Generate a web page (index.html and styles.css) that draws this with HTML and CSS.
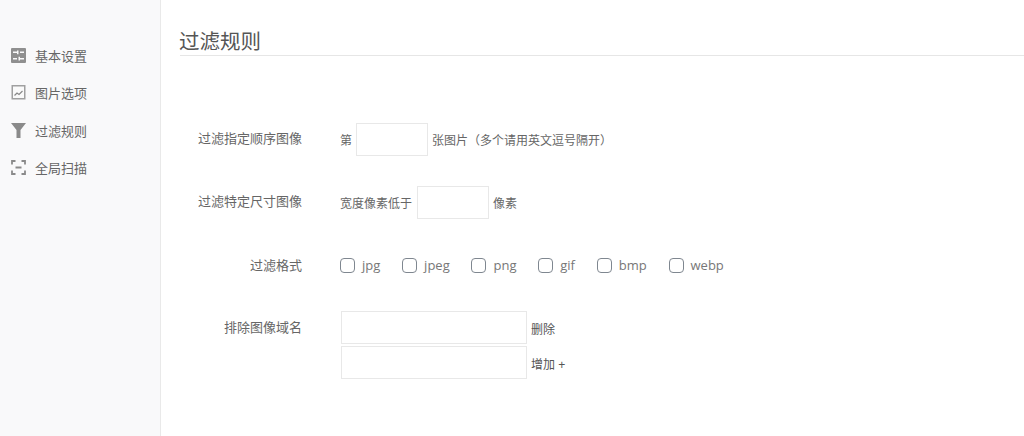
FILE: index.html
```html
<!DOCTYPE html>
<html lang="zh">
<head>
<meta charset="utf-8">
<title>过滤规则</title>
<link rel="stylesheet" href="styles.css">
</head>
<body>
<div class="layout">
  <nav class="sidebar">
    <a class="nav-item">
      <svg class="nav-icon" viewBox="0 0 15 15"><path fill="#8f8f8f" fill-rule="evenodd" d="M1 0h13a1 1 0 0 1 1 1v13a1 1 0 0 1-1 1H1a1 1 0 0 1-1-1V1a1 1 0 0 1 1-1zM2 3.500v1.500h4v1.200h1.500V2.500H6v1zM9 3.500v1.500h4V3.500zM2 10v1.500h4V10zM7.500 8.800v3.700H9v-1h4V10H9V8.800z"/></svg>
      <span>基本设置</span>
    </a>
    <a class="nav-item">
      <svg class="nav-icon" viewBox="0 0 15 15"><rect x="1.250" y="0.750" width="12.500" height="13" fill="#fafafa" stroke="#a0a0a0" stroke-width="1.500"/><path fill="none" stroke="#888" stroke-width="1.200" d="M3.500 10.500l2.500-2.500 2 1.500 3.500-3.500"/></svg>
      <span>图片选项</span>
    </a>
    <a class="nav-item">
      <svg class="nav-icon" viewBox="0 0 15 15"><path fill="#8a8a8a" d="M0 0h15L9.500 7V15h-4V7z"/></svg>
      <span>过滤规则</span>
    </a>
    <a class="nav-item">
      <svg class="nav-icon" viewBox="0 0 15 15"><path fill="none" stroke="#8a8a8a" stroke-width="1.800" d="M4.500 1H1v3.500M10.500 1H14v3.500M4.500 14H1v-3.500M10.500 14H14v-3.500"/><path stroke="#8a8a8a" stroke-width="2" d="M4.500 7.500h6"/></svg>
      <span>全局扫描</span>
    </a>
  </nav>
  <main class="content">
    <h1 class="title"><span class="title-text">过滤规则</span></h1>
    <form class="form">
      <div class="row row-first">
        <label class="row-label">过滤指定顺序图像</label>
        <div class="row-body">
          <span>第</span>
          <input class="field field-small" type="text">
          <span>张图片（多个请用英文逗号隔开）</span>
        </div>
      </div>
      <div class="row">
        <label class="row-label">过滤特定尺寸图像</label>
        <div class="row-body body-size">
          <span>宽度像素低于</span>
          <input class="field field-small" type="text">
          <span>像素</span>
        </div>
      </div>
      <div class="row row-formats">
        <label class="row-label">过滤格式</label>
        <div class="row-body checks">
          <label class="check"><span class="box"></span>jpg</label>
          <label class="check"><span class="box"></span>jpeg</label>
          <label class="check"><span class="box"></span>png</label>
          <label class="check"><span class="box"></span>gif</label>
          <label class="check"><span class="box"></span>bmp</label>
          <label class="check"><span class="box"></span>webp</label>
        </div>
      </div>
      <div class="row row-domains">
        <label class="row-label domain-label">排除图像域名</label>
        <div class="domains">
          <div class="domain-line">
            <input class="field field-wide" type="text">
            <a class="action">删除</a>
          </div>
          <div class="domain-line">
            <input class="field field-wide" type="text">
            <a class="action">增加 +</a>
          </div>
        </div>
      </div>
    </form>
  </main>
</div>
</body>
</html>
```
FILE: styles.css
```css
* { box-sizing: border-box; }
html, body { margin: 0; height: 100%; }
body {
  font-family: "Liberation Sans", "Noto Sans CJK SC", sans-serif;
  color: #606266;
  background: #fff;
  overflow: hidden;
}
.layout { display: flex; height: 436px; }
.sidebar {
  width: 161px;
  flex: none;
  background: #f9f9fa;
  border-right: 1px solid #e9e9e9;
  padding-top: 36.300px;
}
.nav-item {
  display: flex;
  align-items: center;
  gap: 9px;
  height: 37.500px;
  padding-left: 11px;
  font-size: 13px;
  color: #666;
}
.nav-icon { width: 15px; height: 15px; flex: none; }
.content { flex: 1; min-width: 0; padding: 0 0 0 19px; }
.title {
  margin: 0;
  height: 56px;
  padding-top: 28px;
  font-size: 20.500px;
  line-height: 27px;
  font-weight: 400;
  color: #555;
  border-bottom: 1px solid #e6e6e6;
}
.title-text { display: block; margin-left: -1px; }
.form { display: flex; flex-direction: column; }
.row { display: flex; align-items: center; height: 33px; }
.row-first { margin-top: 67px; }
.row + .row { margin-top: 30px; }
.row-label {
  width: 122px;
  flex: none;
  text-align: right;
  font-size: 13px;
  color: #666;
  margin-right: 38px;
  position: relative;
  top: -2px;
}
.row-body { display: flex; align-items: center; gap: 4px; font-size: 12px; color: #666; }
.body-size .field { margin-left: 1px; }
.field {
  height: 33px;
  border: 1px solid #e8e8e8;
  background: #fff;
  outline: none;
  padding: 0;
}
.field-small { width: 72px; }
.field-wide { width: 186px; }
.row.row-formats { height: 14px; margin-top: 39px; }
.row-formats .row-label { top: -1px; }
.checks {
  gap: 0;
  font-family: "Open Sans", "Liberation Sans", sans-serif;
  font-size: 13px;
  color: #777;
}
.check { display: flex; align-items: center; gap: 7px; margin-right: 21.800px; }
.box {
  width: 15px;
  height: 15px;
  border: 1.500px solid #7f8790;
  border-radius: 4px;
  background: #fff;
}
.row.row-domains { align-items: flex-start; height: auto; margin-top: 39px; }
.domain-label { top: 6px; }
.domains { display: flex; flex-direction: column; gap: 2px; margin-left: 1px; }
.domain-line { display: flex; align-items: center; gap: 4px; color: #555; }
.action { font-size: 12px; position: relative; top: 1px; }
```
